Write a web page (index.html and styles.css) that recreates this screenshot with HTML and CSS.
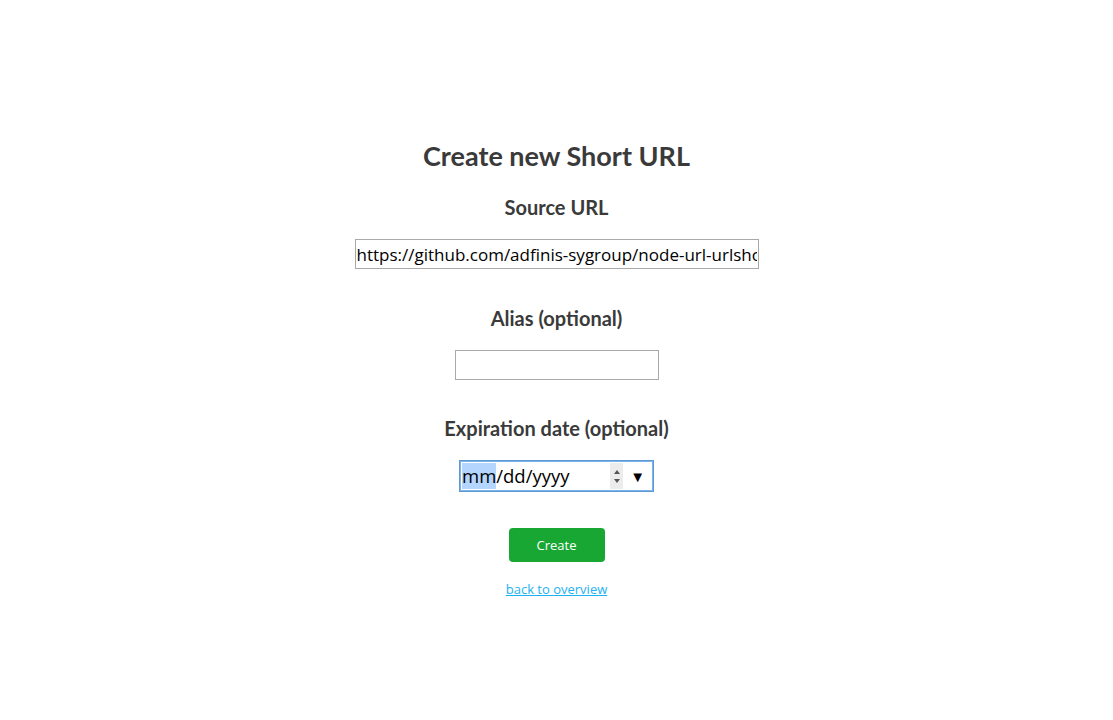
FILE: index.html
```html
<!DOCTYPE html>
<html>
<head>
<meta charset="utf-8">
<link rel="stylesheet" href="styles.css">
</head>
<body>
<main class="page">
  <h1 class="title">Create new Short URL</h1>
  <form class="form">
    <div class="field">
      <label class="label" for="src">Source URL</label>
      <input id="src" class="input input-wide" type="text" value="https://github.com/adfinis-sygroup/node-url-urlshortener">
    </div>
    <div class="field">
      <label class="label" for="alias">Alias (optional)</label>
      <input id="alias" class="input input-short" type="text">
    </div>
    <div class="field field-date">
      <label class="label">Expiration date (optional)</label>
      <div class="date">
        <span class="date-text"><span class="sel">mm</span>/dd/yyyy</span>
        <span class="spin"><span class="up"></span><span class="down"></span></span>
        <span class="drop">▼</span>
      </div>
    </div>
    <button type="button" class="btn">Create</button>
    <a class="back" href="#">back to overview</a>
  </form>
</main>
</body>
</html>
```
FILE: styles.css
```css
html, body {
  margin: 0;
  padding: 0;
  background: #fff;
}
body {
  font-family: Lato, "Open Sans", sans-serif;
  color: #3d3d3d;
}
.page {
  display: flex;
  flex-direction: column;
  align-items: center;
  padding-top: 137px;
}
.title {
  margin: 0;
  font-size: 27px;
  font-weight: 700;
  line-height: 38px;
  color: #3a3a3a;
}
.form {
  display: flex;
  flex-direction: column;
  align-items: center;
  padding-top: 18px;
}
.field {
  display: flex;
  flex-direction: column;
  align-items: center;
  gap: 18px;
}
.field + .field {
  margin-top: 35px;
}
.field + .field-date {
  margin-top: 34px;
}
.label {
  font-size: 20px;
  font-weight: 700;
  line-height: 28px;
  color: #3a3a3a;
}
.input {
  box-sizing: border-box;
  height: 30px;
  margin: 0;
  border: 1px solid #a9a9a9;
  border-radius: 0;
  background: #fff;
  font-family: "Open Sans", sans-serif;
  font-size: 17px;
  color: #000;
  padding: 0 1px;
  outline: none;
}
.input-wide { width: 404px; }
.input-short { width: 204px; }
.date {
  box-sizing: border-box;
  width: 195px;
  height: 32px;
  border: 1px solid #5a9ad6;
  box-shadow: 0 0 0 1px #7fb3e8 inset;
  display: flex;
  align-items: center;
  padding: 0 8px 0 2px;
  font-family: "Open Sans", sans-serif;
  font-size: 18.5px;
  color: #000;
}
.date-text { flex: 1; line-height: 26px; white-space: nowrap; }
.sel { background: #b4d5fe; display: inline-block; line-height: 26px; }
.spin {
  width: 13px;
  height: 26px;
  background: #ececec;
  display: flex;
  flex-direction: column;
  align-items: center;
  justify-content: center;
  gap: 5px;
  margin-right: 7px;
}
.up, .down {
  width: 0;
  height: 0;
  border-left: 3px solid transparent;
  border-right: 3px solid transparent;
}
.up { border-bottom: 4px solid #555; }
.down { border-top: 4px solid #555; }
.drop { font-size: 15px; color: #000; }
.btn {
  margin-top: 36px;
  width: 96px;
  height: 34px;
  border: none;
  border-radius: 4px;
  background: #19a733;
  color: #fff;
  font-family: "Open Sans", sans-serif;
  font-size: 13px;
}
.back {
  margin-top: 18px;
  font-family: "Open Sans", sans-serif;
  font-size: 13px;
  color: #1db1f1;
}
```
